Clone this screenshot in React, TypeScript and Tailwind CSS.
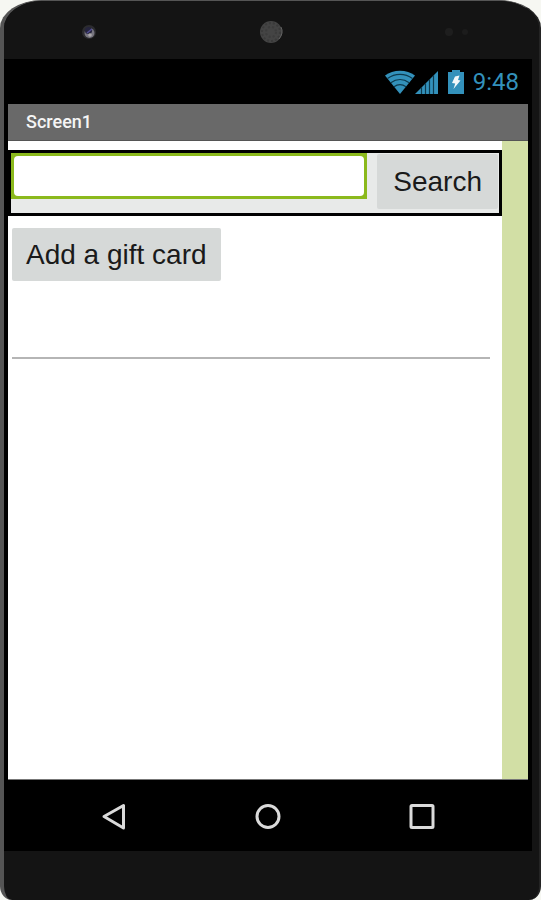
import React from "react";

const WifiIcon = () => (
  <svg className="h-6 w-[30px]" viewBox="0 0 30 24" fill="none" aria-hidden="true">
    <path d="M15 24 L0 5.5 C8 -1 22 -1 30 5.5 Z" fill="#3391bb" />
    <path d="M2.5 8.6 C10 3 20 3 27.5 8.6" stroke="#0d3a4e" strokeWidth="1.2" />
    <path d="M5.8 12.8 C11.5 8.5 18.5 8.5 24.2 12.8" stroke="#0d3a4e" strokeWidth="1.2" />
    <path d="M9 16.8 C12.8 14 17.2 14 21 16.8" stroke="#0d3a4e" strokeWidth="1.2" />
  </svg>
);

const SignalIcon = () => (
  <svg className="h-6 w-[23px]" viewBox="0 0 23 24" fill="none" aria-hidden="true">
    <path d="M0 24 L23 1 V24 Z" fill="#3391bb" />
    <path d="M6.5 17 V24 M10.5 13 V24 M14.5 9 V24 M18.5 5 V24" stroke="#0d3a4e" strokeWidth="1.2" />
  </svg>
);

const BatteryIcon = () => (
  <svg className="h-6 w-4" viewBox="0 0 16 24" aria-hidden="true">
    <path d="M4 0 H12 V2 H16 V24 H0 V2 H4 Z" fill="#3391bb" />
    <path d="M7 6.5 L11.5 5.5 L10 10 L12.5 10.5 L5.5 19 L7.2 13.5 L4 13 Z" fill="#f2f8fa" />
  </svg>
);

const TopBezel = () => (
  <div className="grid h-[58px] shrink-0 grid-cols-3 items-center bg-[#141414] pt-1">
    <svg className="ml-[77px] size-4" viewBox="0 0 16 16" aria-hidden="true">
      <circle cx="8" cy="8" r="7" fill="#2c2c2f" />
      <circle cx="8.5" cy="9" r="5" fill="#77757f" />
      <circle cx="7.5" cy="6.5" r="3.6" fill="#25243d" />
      <path d="M6 9 L11 5" stroke="#514d91" strokeWidth="1.6" />
      <circle cx="9" cy="11" r="1.8" fill="#aaa7a9" />
    </svg>
    <svg className="size-6 justify-self-center" viewBox="0 0 24 24" aria-hidden="true">
      <circle cx="12" cy="12" r="11" fill="#444444" />
      <circle cx="12" cy="12" r="9" fill="none" stroke="#3a3a3a" strokeWidth="2" strokeDasharray="2 2" />
      <circle cx="12" cy="12" r="5" fill="none" stroke="#3c3c3c" strokeWidth="2" strokeDasharray="2 2" />
      <path d="M22 7 Q25 13 20 19" fill="none" stroke="#626262" />
    </svg>
    <svg className="mr-[68px] h-3 w-7 justify-self-end" viewBox="0 0 28 12" aria-hidden="true">
      <circle cx="6" cy="6" r="4" fill="#1e1e1e" />
      <circle cx="22" cy="6" r="3" fill="#1c1c1c" />
    </svg>
  </div>
);

const StatusBar = () => (
  <div className="flex h-[45px] items-center justify-end pr-[13px]">
    <WifiIcon />
    <SignalIcon />
    <div className="ml-[10px]">
      <BatteryIcon />
    </div>
    <span className="ml-[9px] font-[Roboto,sans-serif] text-2xl text-[#3391bb]">9:48</span>
  </div>
);

const NavBar = () => (
  <nav className="flex h-[71px] shrink-0 items-center justify-between px-24">
    <button type="button" aria-label="Back">
      <svg className="size-7" viewBox="0 0 28 28" fill="none" aria-hidden="true">
        <path d="M23.5 3.5 V26 L4 14.5 Z" stroke="#dadada" strokeWidth="3" strokeLinejoin="round" />
      </svg>
    </button>
    <button type="button" aria-label="Home">
      <svg className="size-7" viewBox="0 0 28 28" fill="none" aria-hidden="true">
        <circle cx="14" cy="14.5" r="11" stroke="#dadada" strokeWidth="3" />
      </svg>
    </button>
    <button type="button" aria-label="Recent apps">
      <svg className="size-7" viewBox="0 0 28 28" fill="none" aria-hidden="true">
        <rect x="3" y="3.5" width="22" height="22" rx="1" stroke="#dadada" strokeWidth="3" />
      </svg>
    </button>
  </nav>
);

const App: React.FC = () => {
  return (
    <div className="min-h-screen bg-[#f6f7f2] font-['Liberation_Sans',Arial,sans-serif]">
      {/* Phone body */}
      <div className="flex min-h-screen flex-col overflow-hidden rounded-t-[42px_28px] rounded-b-[12px_14px] border-t border-r-2 border-l-4 border-t-[#555555] border-r-[#242424] border-l-[#555555] bg-[#141414]">
        <TopBezel />

        <div className="mr-[7px] flex grow flex-col bg-black">
          <StatusBar />

          <div className="mr-1 ml-1 flex grow flex-col bg-white">
            <header className="flex h-[37px] items-center border-b border-[#555555] bg-[#696969] pl-[18px]">
              <h1 className="font-[Roboto,sans-serif] text-lg leading-6 font-medium text-[#f5f5f5]">Screen1</h1>
            </header>

            <div className="flex grow border-b border-[#777777]">
              <main className="grow pt-[9px]">
                <form className="flex items-start border-[3px] border-black bg-[#e8eae9]" onSubmit={(e) => e.preventDefault()}>
                  <div className="min-w-0 grow bg-[#8bb91c] p-[3px]">
                    <input
                      type="text"
                      aria-label="Search gift cards"
                      className="block h-10 w-full rounded-[4px] bg-white px-2 text-[28px] outline-none"
                    />
                  </div>
                  <button type="submit" className="mt-px mr-px mb-1 ml-[10px] h-[55px] rounded-[2px] bg-[#d6d9d8] px-4 text-[28px] leading-8 text-[#1a1a1a]">
                    Search
                  </button>
                </form>

                <button type="button" className="mt-3 ml-1 block h-[53px] rounded-[2px] bg-[#d6d9d8] px-[14px] text-[28px] leading-8 text-[#1a1a1a]">
                  Add a gift card
                </button>

                <hr className="mt-[76px] mr-3 ml-1 border-t-2 border-[#b5b5b5]" />
              </main>
              <div className="w-[26px] shrink-0 bg-[#d2dfa5]" />
            </div>
          </div>

          <NavBar />
        </div>

        <div className="h-[49px] shrink-0" />
      </div>
    </div>
  );
};

export default App;
